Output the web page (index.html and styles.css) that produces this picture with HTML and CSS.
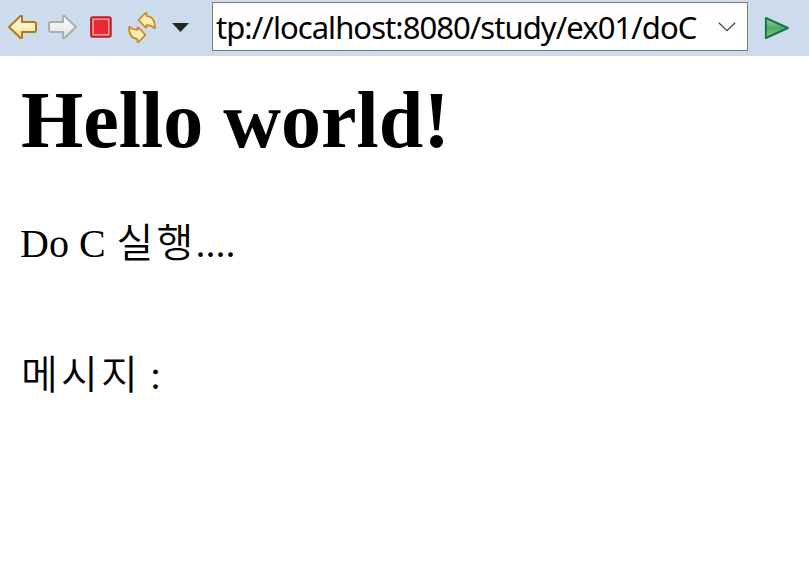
FILE: index.html
```html
<!DOCTYPE html>
<html lang="ko">
<head>
<meta charset="utf-8">
<title>Home</title>
<link rel="stylesheet" href="styles.css">
</head>
<body>
<header class="toolbar">
  <svg class="icons" width="212" height="56" viewBox="0 0 212 56" aria-hidden="true">
    <defs>
      <linearGradient id="gold" x1="0" y1="0" x2="0" y2="1"><stop offset="0" stop-color="#fff"/><stop offset="1" stop-color="#ffe08a"/></linearGradient>
      <linearGradient id="gray" x1="0" y1="0" x2="0" y2="1"><stop offset="0" stop-color="#fff"/><stop offset="1" stop-color="#dedede"/></linearGradient>
    </defs>
    <path d="M9 27 20.500 16H22v6h12q2 0 2 2v6q0 2-2 2H22v6h-1.500Z" fill="url(#gold)" stroke="#b8780e" stroke-width="2" stroke-linejoin="round"/>
    <path d="M76 27 64.500 16H63v6H51q-2 0-2 2v6q0 2 2 2h12v6h1.500Z" fill="url(#gray)" stroke="#acacac" stroke-width="2" stroke-linejoin="round"/>
    <rect x="90.900" y="17" width="20" height="20" rx="2" fill="#e72b36" stroke="#bd1828" stroke-width="1.600"/>
    <rect x="93.100" y="19.200" width="15.600" height="15.600" fill="none" stroke="#f5a5aa" stroke-width="1.400"/>
    <g fill="#ffedb5" stroke="#c8871b" stroke-width="1.700" stroke-linejoin="round">
      <path d="M138.500 20 145.500 13h1v3c5.500.200 9 5 8.300 12.500-2-2.200-4-3.300-8.300-3.300v2.300h-1Z"/>
      <path d="M145.500 35 138.500 42h-1v-3c-5.500-.200-9-5-8.300-12.500 2 2.200 4 3.300 8.300 3.300v-2.300h1Z"/>
    </g>
    <path d="M172 23h17l-8.500 9Z" fill="#262626"/>
  </svg>
  <div class="address">
    <span class="url">tp://localhost:8080/study/ex01/doC</span>
    <svg class="chevron" width="18" height="10" viewBox="0 0 18 10" aria-hidden="true"><path d="m.8.800 8.200 7.800L17.200.800" fill="none" stroke="#444" stroke-width="1.200"/></svg>
  </div>
  <svg class="go" width="26" height="24" viewBox="0 0 26 24" aria-hidden="true">
    <defs><linearGradient id="green" x1="0" y1="0" x2="0" y2="1"><stop offset="0" stop-color="#a8d3a0"/><stop offset=".5" stop-color="#4fa767"/><stop offset="1" stop-color="#8bce70"/></linearGradient></defs>
    <path d="M1.900 2 24 12 1.900 22Z" fill="url(#green)" stroke="#17764b" stroke-width="2" stroke-linejoin="round"/>
  </svg>
</header>
<main class="page">
  <h1 class="title">Hello world!</h1>
  <p class="line">Do C <span class="hangul">실행</span>....</p>
  <p class="line message"><span class="hangul">메시지</span> :</p>
</main>
</body>
</html>
```
FILE: styles.css
```css
body {
  margin: 0;
  background: #fff;
  color: #000;
  font-family: "Liberation Serif", "Noto Sans CJK KR", serif;
}
.toolbar {
  display: flex;
  height: 56px;
  background: #cddcec;
}
.icons {
  flex: none;
}
.address {
  box-sizing: border-box;
  display: flex;
  align-items: center;
  width: 536px;
  height: 49px;
  margin-top: 2px;
  padding: 0 11px 0 3px;
  border: 1px solid #7a7a7a;
  background: #fff;
}
.url {
  flex: 1;
  font: 31px/44px "Noto Sans", sans-serif;
  letter-spacing: -0.950px;
  white-space: nowrap;
}
.chevron {
  flex: none;
}
.go {
  margin: 16px 0 0 16px;
}
.page {
  padding: 18px 20px 0 21px;
}
.title {
  margin: 0;
  font-size: 80px;
  line-height: 92px;
}
.line {
  margin: 54px 0 0 -1px;
  font-size: 40px;
  line-height: 46px;
}
.message {
  margin-top: 85px;
}
.hangul {
  font-family: "Noto Sans CJK KR", sans-serif;
  font-weight: 350;
  letter-spacing: 3.200px;
  line-height: 1;
  position: relative;
  left: 1px;
}
```
